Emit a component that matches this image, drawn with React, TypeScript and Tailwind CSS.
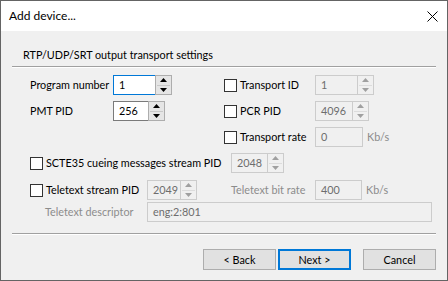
import React from "react";

const Up = ({ c }: { c: string }) => (
  <svg width="7" height="4" viewBox="0 0 7 4"><path d="M3.5 0 L7 4 L0 4 Z" fill={c} /></svg>
);
const Down = ({ c }: { c: string }) => (
  <svg width="7" height="4" viewBox="0 0 7 4"><path d="M0 0 L7 0 L3.5 4 Z" fill={c} /></svg>
);

function Spin({ w, value, disabled, focused }: { w: string; value: string; disabled?: boolean; focused?: boolean }) {
  const border = focused ? "border-[#0078d7]" : disabled ? "border-[#cccccc]" : "border-[#7a7a7a]";
  return (
    <div className="flex h-[20px] shrink-0">
      <div className={`${w} h-[20px] border ${border} ${disabled ? "bg-[#f0f0f0] text-[#6d6d6d]" : "bg-white text-black"} flex items-center pl-[5px]`}>
        {value}
      </div>
      <div className={`w-[17px] h-[20px] border ${disabled ? "border-[#cccccc] bg-[#f0f0f0]" : "border-[#adadad] bg-[#e5e5e5]"} flex flex-col -ml-px`}>
        <div className="flex-1 flex items-center justify-center">
          <Up c={disabled ? "#a0a0a0" : "#000"} />
        </div>
        <div className={`h-px ${disabled ? "bg-[#dcdcdc]" : "bg-[#c8c8c8]"} mx-[1px]`} />
        <div className="flex-1 flex items-center justify-center">
          <Down c={disabled ? "#a0a0a0" : "#000"} />
        </div>
      </div>
    </div>
  );
}

function Field({ w, value }: { w: string; value: string }) {
  return (
    <div className={`${w} h-[20px] shrink-0 border border-[#cccccc] bg-[#f0f0f0] text-[#6d6d6d] flex items-center pl-[5px]`}>
      {value}
    </div>
  );
}

function Check({ label, w }: { label: string; w?: string }) {
  return (
    <div className={`flex items-center gap-[3px] shrink-0 ${w ?? ""}`}>
      <div className="w-[13px] h-[13px] border border-[#333333] bg-white shrink-0" />
      <span>{label}</span>
    </div>
  );
}

function Btn({ label, primary }: { label: string; primary?: boolean }) {
  return (
    <div
      className={`w-[73px] h-[21px] flex items-center justify-center bg-[#e1e1e1] ${
        primary ? "border-2 border-[#0078d7]" : "border border-[#adadad]"
      }`}
    >
      {label}
    </div>
  );
}

export default function App() {
  return (
    <div className="w-[448px] h-[281px] border border-[#646464] bg-[#f0f0f0] flex flex-col text-[10.8px] leading-[16px] text-black font-['Lato',sans-serif] whitespace-nowrap overflow-hidden">
      <div className="h-[30px] bg-white flex items-center justify-between pl-[8px] pr-[9px] shrink-0">
        <span className="text-[12px]">Add device...</span>
        <svg width="11" height="11" viewBox="0 0 11 11">
          <path d="M0.5 0.5 L10.5 10.5 M10.5 0.5 L0.5 10.5" stroke="#000" strokeWidth="1" />
        </svg>
      </div>
      <div className="flex flex-col px-[11px]">
        <div className="pt-[16px] pl-[11px]">RTP/UDP/SRT output transport settings</div>
        <div className="mt-[3px] h-px bg-[#a0a0a0]" />
        <div className="h-px bg-white" />

        <div className="flex pt-[7px]">
          <div className="w-[212px] pl-[18px] flex flex-col gap-[6px]">
            <div className="flex items-center h-[20px]">
              <span className="w-[83px]">Program number</span>
              <Spin w="w-[43px]" value="1" focused />
            </div>
            <div className="flex items-center h-[20px]">
              <span className="w-[83px]">PMT PID</span>
              <Spin w="w-[36px]" value="256" />
            </div>
          </div>
          <div className="flex flex-col gap-[6px]">
            <div className="flex items-center h-[20px]">
              <Check label="Transport ID" w="w-[91px]" />
              <Spin w="w-[43px]" value="1" disabled />
            </div>
            <div className="flex items-center h-[20px]">
              <Check label="PCR PID" w="w-[91px]" />
              <Spin w="w-[38px]" value="4096" disabled />
            </div>
            <div className="flex items-center h-[20px]">
              <Check label="Transport rate" w="w-[91px]" />
              <Field w="w-[48px]" value="0" />
              <span className="ml-[4px] text-[#8c8c8c]">Kb/s</span>
            </div>
          </div>
        </div>

        <div className="flex items-center h-[20px] mt-[6px] pl-[18px]">
          <Check label="SCTE35 cueing messages stream PID" w="w-[201px]" />
          <Spin w="w-[37px]" value="2048" disabled />
        </div>

        <div className="flex items-center h-[20px] mt-[7px] pl-[18px]">
          <Check label="Teletext stream PID" w="w-[117px]" />
          <Spin w="w-[34px]" value="2049" disabled />
          <span className="ml-[34px] w-[84px] text-[#8c8c8c]">Teletext bit rate</span>
          <Field w="w-[47px]" value="400" />
          <span className="ml-[4px] text-[#8c8c8c]">Kb/s</span>
        </div>

        <div className="flex items-center h-[20px] mt-[2px] pl-[33px]">
          <span className="w-[102px] text-[#8c8c8c]">Teletext descriptor</span>
          <Field w="w-[285px]" value="eng:2:801" />
        </div>

        <div className="mt-[11px] h-px bg-[#a0a0a0]" />
        <div className="h-px bg-white" />

        <div className="flex justify-end mt-[14px] pr-[0px]">
          <Btn label="< Back" />
          <div className="ml-[2px]">
            <Btn label="Next >" primary />
          </div>
          <div className="ml-[12px]">
            <Btn label="Cancel" />
          </div>
        </div>
      </div>
    </div>
  );
}
